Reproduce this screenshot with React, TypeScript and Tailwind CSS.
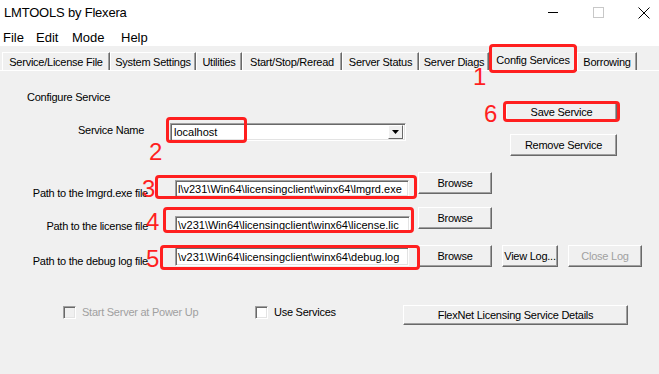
import clsx from "clsx";

const font = "font-['Liberation_Sans',Arial,sans-serif]";

interface BtnProps {
  children: any;
  className?: string;
  disabled?: boolean;
}

function Btn(props: BtnProps) {
  return (
    <div
      className={clsx(
        "flex items-center justify-center bg-[#f0f0f0] border border-t-white border-l-white border-r-[#696969] border-b-[#696969] shadow-[inset_-1px_-1px_0_#a0a0a0] text-[11px] leading-[14px] tracking-[-0.25px] whitespace-nowrap",
        props.disabled ? "text-[#a0a0a0]" : "text-black",
        props.className
      )}
    >
      {props.children}
    </div>
  );
}

function Field(props: { text: string; className?: string }) {
  return (
    <div
      className={clsx(
        "flex items-center bg-white border border-t-[#a0a0a0] border-l-[#a0a0a0] border-b-white border-r-white shadow-[inset_1px_1px_0_#696969,inset_-1px_-1px_0_#e3e3e3] pl-[2px] overflow-hidden whitespace-nowrap text-[11px] leading-[14px] tracking-normal text-black",
        props.className
      )}
    >
      {props.text}
    </div>
  );
}

function Check(props: { label: string; disabled?: boolean; className?: string }) {
  return (
    <div className={clsx("flex items-start", props.className)}>
      <div
        className={clsx(
          "mt-[1px] w-[13px] h-[13px] border border-t-[#a0a0a0] border-l-[#a0a0a0] border-b-white border-r-white shadow-[inset_1px_1px_0_#696969,inset_-1px_-1px_0_#e3e3e3]",
          props.disabled ? "bg-[#f0f0f0]" : "bg-white"
        )}
      />
      <span
        className={clsx(
          "ml-[6px] text-[11px] leading-[14px]",
          props.disabled ? "text-[#a0a0a0]" : "text-black"
        )}
      >
        {props.label}
      </span>
    </div>
  );
}

const tabs = [
  { name: "Service/License File", w: "w-[108px]" },
  { name: "System Settings", w: "w-[86px]" },
  { name: "Utilities", w: "w-[46px]" },
  { name: "Start/Stop/Reread", w: "w-[100px]" },
  { name: "Server Status", w: "w-[77px]" },
  { name: "Server Diags", w: "w-[70px]" },
  { name: "Config Services", w: "w-[88px]", active: true },
  { name: "Borrowing", w: "w-[60px]" },
];

const paths = [
  {
    label: "Path to the lmgrd.exe file",
    value: "l\\v231\\Win64\\licensingclient\\winx64\\lmgrd.exe",
  },
  {
    label: "Path to the license file",
    value: "\\v231\\Win64\\licensingclient\\winx64\\license.lic",
  },
  {
    label: "Path to the debug log file",
    value: "\\v231\\Win64\\licensingclient\\winx64\\debug.log",
  },
];

export default function App() {
  return (
    <div className={clsx("relative w-[659px] h-[374px] overflow-hidden bg-[#f0f0f0] text-black", font)}>
      {/* title bar */}
      <div className="h-[28px] pb-[3px] flex items-center bg-white">
        <span className="ml-[4px] text-[13px] leading-[15px] tracking-[-0.2px]">LMTOOLS by Flexera</span>
        <div className="ml-auto flex items-center h-full">
          <svg width="46" height="25" viewBox="0 0 46 25">
            <line x1="27" y1="12.5" x2="37" y2="12.5" stroke="#000" strokeWidth="1" />
          </svg>
          <svg width="46" height="25" viewBox="0 0 46 25">
            <rect x="26.5" y="7.5" width="10" height="10" fill="none" stroke="#c8c8c8" strokeWidth="1" />
          </svg>
          <svg width="46" height="25" viewBox="0 0 46 25">
            <path d="M25.5 7.5 L36.5 18.5 M36.5 7.5 L25.5 18.5" stroke="#000" strokeWidth="1" />
          </svg>
        </div>
      </div>

      {/* menu */}
      <div className="h-[18px] flex items-center bg-white text-[13px] leading-[15px]">
        <span className="ml-[3px] w-[33px]">File</span>
        <span className="w-[36px]">Edit</span>
        <span className="w-[49px]">Mode</span>
        <span>Help</span>
      </div>

      {/* tabs */}
      <div className="h-[25px] pl-[2px] flex items-end border-b border-white tracking-[-0.25px]">
        {tabs.map((t) =>
          t.active ? (
            <div
              key={t.name}
              className={clsx(
                t.w,
                "relative z-10 -mb-px h-[25px] pt-[6px] flex justify-center bg-[#f0f0f0] border-t border-l border-white border-r border-r-[#696969] shadow-[inset_-1px_0_0_#a0a0a0] text-[11px] leading-[14px] whitespace-nowrap"
              )}
            >
              {t.name}
            </div>
          ) : (
            <div
              key={t.name}
              className={clsx(
                t.w,
                "h-[18px] flex items-center justify-center border-t border-l border-white border-r border-r-[#696969] shadow-[inset_-1px_0_0_#a0a0a0] text-[11px] leading-[14px] whitespace-nowrap"
              )}
            >
              {t.name}
            </div>
          )
        )}
      </div>

      {/* panel */}
      <div className="flex flex-col text-[11px] leading-[14px] tracking-[-0.25px]">
        <div className="h-[100px] flex">
          <div className="w-[505px] flex flex-col">
            <span className="mt-[19px] ml-[27px]">Configure Service</span>
            <div className="mt-[19px] flex items-start">
              <span className="w-[170px] pl-[78px]">Service Name</span>
              <div className="w-[236px] h-[18px] flex items-center bg-white border border-t-[#a0a0a0] border-l-[#a0a0a0] border-b-white border-r-white shadow-[inset_1px_1px_0_#696969,inset_-1px_-1px_0_#e3e3e3] pl-[3px] pr-[2px] tracking-normal">
                <span className="flex-1">localhost</span>
                <div className="w-[15px] h-[14px] flex items-center justify-center bg-[#f0f0f0] border border-t-white border-l-white border-r-[#696969] border-b-[#696969]">
                  <svg width="7" height="4" viewBox="0 0 7 4">
                    <path d="M0 0 H7 L3.5 4 Z" fill="#000" />
                  </svg>
                </div>
              </div>
            </div>
          </div>
          <div className="w-[112px] flex flex-col items-end">
            <Btn className="mt-[31px] w-[111px] h-[19px]">Save Service</Btn>
            <Btn className="mt-[13px] w-[107px] h-[22px]">Remove Service</Btn>
          </div>
        </div>

        {/* row 1 */}
        <div className="h-[27px] flex items-start">
          <span className="mt-[15px] w-[148px] text-right">{paths[0].label}</span>
          <Field className="ml-[27px] mt-[9px] w-[234px] h-[17px]" text={paths[0].value} />
          <Btn className="ml-[9px] mt-[1px] w-[74px] h-[22px]">Browse</Btn>
        </div>

        {/* row 2 */}
        <div className="mt-[9px] h-[26px] flex items-start">
          <span className="mt-[12px] w-[148px] text-right">{paths[1].label}</span>
          <Field className="ml-[27px] mt-[9px] w-[235px] h-[17px]" text={paths[1].value} />
          <Btn className="ml-[8px] w-[74px] h-[22px]">Browse</Btn>
        </div>

        {/* row 3 */}
        <div className="mt-[12px] h-[22px] flex items-start">
          <span className="mt-[9px] w-[148px] text-right">{paths[2].label}</span>
          <Field className="ml-[27px] mt-[2px] w-[234px] h-[19px]" text={paths[2].value} />
          <Btn className="ml-[9px] w-[74px] h-[22px]">Browse</Btn>
          <Btn className="ml-[10px] w-[56px] h-[22px]">View Log...</Btn>
          <Btn className="ml-[10px] w-[74px] h-[22px]" disabled>
            Close Log
          </Btn>
        </div>

        {/* checkboxes */}
        <div className="mt-[38px] h-[20px] flex items-start">
          <Check className="ml-[63px] w-[192px]" label="Start Server at Power Up" disabled />
          <Check className="w-[148px]" label="Use Services" />
          <Btn className="w-[225px] h-[20px]">FlexNet Licensing Service Details</Btn>
        </div>
      </div>

      {/* red annotations laid over the screenshot */}
      <div className="absolute inset-0 pointer-events-none z-20">
        <div className="absolute left-[489px] top-[44px] w-[88px] h-[29px] border-[3px] border-[#ff1f1f] rounded-[4px]" />
        <div className="absolute left-[166px] top-[117px] w-[81px] h-[26px] border-[3px] border-[#ff1f1f] rounded-[4px]" />
        <div className="absolute left-[155px] top-[175px] w-[262px] h-[24px] border-[3px] border-[#ff1f1f] rounded-[4px]" />
        <div className="absolute left-[163px] top-[207px] w-[251px] h-[26px] border-[3px] border-[#ff1f1f] rounded-[4px]" />
        <div className="absolute left-[160px] top-[245px] w-[260px] h-[25px] border-[3px] border-[#ff1f1f] rounded-[4px]" />
        <div className="absolute left-[503px] top-[101px] w-[117px] h-[21px] border-[3px] border-[#ff1f1f] rounded-[4px]" />

        <span className="absolute left-[473px] top-[65px] text-[24px] leading-none text-[#ff1f1f]">1</span>
        <span className="absolute left-[149px] top-[140px] text-[24px] leading-none text-[#ff1f1f]">2</span>
        <span className="absolute left-[142px] top-[177px] text-[24px] leading-none text-[#ff1f1f]">3</span>
        <span className="absolute left-[146px] top-[210px] text-[24px] leading-none text-[#ff1f1f]">4</span>
        <span className="absolute left-[146px] top-[247px] text-[24px] leading-none text-[#ff1f1f]">5</span>
        <span className="absolute left-[484px] top-[102px] text-[24px] leading-none text-[#ff1f1f]">6</span>
      </div>
    </div>
  );
}
